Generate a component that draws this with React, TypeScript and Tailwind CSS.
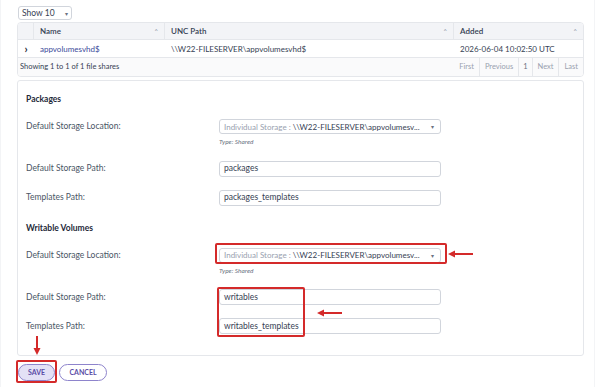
import React from 'react';

function Caret() {
  return <span className="text-[6px] text-gray-400 leading-none">^</span>;
}

function Field({ label, value }: { label: string; value: string }) {
  return (
    <div className="flex items-center h-[16px]">
      <div className="w-[193px] text-[8.5px] text-gray-600">{label}</div>
      <div className="w-[222px] h-[16px] border border-gray-300 rounded-[3px] px-[4px] flex items-center text-[8.5px] text-gray-700 bg-white">
        {value}
      </div>
    </div>
  );
}

function SelectField({ label }: { label: string }) {
  return (
    <div>
      <div className="flex items-center h-[15px]">
        <div className="w-[193px] text-[8.5px] text-gray-600">{label}</div>
        <div className="w-[222px] h-[15px] border border-gray-300 rounded-[3px] px-[4px] flex items-center justify-between text-[8px] bg-white">
          <span className="text-gray-400 whitespace-nowrap">
            Individual Storage : <span className="text-gray-700">\\W22-FILESERVER\appvolumesv...</span>
          </span>
          <span className="text-[6px] text-gray-500 mr-[2px]">▾</span>
        </div>
      </div>
      <div className="ml-[193px] mt-[5px] text-[6.5px] italic text-gray-500 leading-none">Type: Shared</div>
    </div>
  );
}

function ArrowLeft({ className }: { className: string }) {
  return (
    <svg className={className} width="26" height="8" viewBox="0 0 26 8">
      <line x1="25" y1="4" x2="6" y2="4" stroke="#d42a2a" strokeWidth="2" />
      <polygon points="0,4 7,0.5 7,7.5" fill="#d42a2a" />
    </svg>
  );
}

export default function App() {
  return (
    <div className="relative w-[600px] h-[387px] bg-white overflow-hidden border-l border-gray-100" style={{ fontFamily: 'Lato, "Noto Sans", sans-serif' }}>
      <div className="absolute right-[5px] top-0 bottom-0 w-px bg-gray-100" />
      <div className="pl-[16px] pr-[16px] pt-[6px]">
        <div className="ml-[1px] w-[54px] h-[14px] border border-gray-300 rounded-[3px] flex items-center justify-between px-[3px] text-[8.5px] text-gray-700">
          <span>Show 10</span>
          <span className="text-[6px] text-gray-500">▾</span>
        </div>

        <div className="mt-[2px] border border-gray-200 rounded-[4px] overflow-hidden">
          <div className="flex h-[17px] bg-[#f3f4f7] text-[8px] text-gray-700 font-semibold border-b border-gray-200">
            <div className="w-[16px] border-r border-gray-200" />
            <div className="w-[131px] px-[6px] flex items-center justify-between border-r border-gray-200">
              <span>Name</span>
              <Caret />
            </div>
            <div className="w-[289px] px-[6px] flex items-center justify-between border-r border-gray-200">
              <span>UNC Path</span>
              <Caret />
            </div>
            <div className="flex-1 px-[6px] flex items-center justify-between">
              <span>Added</span>
              <Caret />
            </div>
          </div>
          <div className="flex h-[18px] text-[8px] items-center border-b border-gray-200">
            <div className="w-[16px] flex justify-center text-gray-800 font-bold text-[11px] leading-none">›</div>
            <div className="w-[131px] px-[6px] text-[#3a4a9a]">appvolumesvhd$</div>
            <div className="w-[289px] px-[6px] text-gray-700">\\W22-FILESERVER\appvolumesvhd$</div>
            <div className="flex-1 px-[6px] text-gray-700">2026-06-04 10:02:50 UTC</div>
          </div>
          <div className="flex h-[18px] items-center justify-between bg-[#fafafb] text-[7.5px]">
            <span className="pl-[2px] text-gray-700">Showing 1 to 1 of 1 file shares</span>
            <div className="flex h-full text-gray-400">
              <span className="px-[5px] flex items-center border-r border-gray-200">First</span>
              <span className="px-[5px] flex items-center border-r border-gray-200">Previous</span>
              <span className="px-[4px] flex items-center border-r border-gray-200 text-gray-500">1</span>
              <span className="px-[5px] flex items-center border-r border-gray-200">Next</span>
              <span className="px-[5px] flex items-center">Last</span>
            </div>
          </div>
        </div>

        <div className="mt-[3px] h-[276px] border border-gray-200 rounded-[3px] pl-[8px] pt-[14px]">
          <div className="text-[8.5px] font-bold text-gray-800 h-[8px] leading-[8px]">Packages</div>
          <div className="mt-[16px]">
            <SelectField label="Default Storage Location:" />
          </div>
          <div className="mt-[15px]">
            <Field label="Default Storage Path:" value="packages" />
          </div>
          <div className="mt-[13px]">
            <Field label="Templates Path:" value="packages_templates" />
          </div>
          <div className="mt-[18px] text-[8.5px] font-bold text-gray-800 h-[8px] leading-[8px]">Writable Volumes</div>
          <div className="mt-[16px]">
            <SelectField label="Default Storage Location:" />
          </div>
          <div className="mt-[15px]">
            <Field label="Default Storage Path:" value="writables" />
          </div>
          <div className="mt-[13px]">
            <Field label="Templates Path:" value="writables_templates" />
          </div>
        </div>

        <div className="mt-[8px] ml-[1px] flex gap-[4px]">
          <div className="w-[37px] h-[17px] rounded-full border border-[#8e84cc] bg-[#e3e1f6] flex items-center justify-center text-[7px] font-bold text-[#5a4ca6]">SAVE</div>
          <div className="w-[48px] h-[17px] rounded-full border border-[#8e84cc] bg-white flex items-center justify-center text-[7px] font-bold text-[#5a4ca6]">CANCEL</div>
        </div>
      </div>

      {/* annotations */}
      <div className="absolute left-[214px] top-[243px] w-[232px] h-[21px] border-2 border-[#d42a2a] rounded-[2px]" />
      <div className="absolute left-[216px] top-[287px] w-[88px] h-[50px] border-2 border-[#d42a2a] rounded-[2px]" />
      <div className="absolute left-[15px] top-[360px] w-[41px] h-[23px] border-2 border-[#d42a2a] rounded-[2px]" />
      <ArrowLeft className="absolute left-[447px] top-[250px]" />
      <ArrowLeft className="absolute left-[316px] top-[309px]" />
      <svg className="absolute left-[32px] top-[336px]" width="8" height="20" viewBox="0 0 8 20">
        <line x1="4" y1="0" x2="4" y2="13" stroke="#d42a2a" strokeWidth="2" />
        <polygon points="4,19 0.5,12 7.5,12" fill="#d42a2a" />
      </svg>
    </div>
  );
}
